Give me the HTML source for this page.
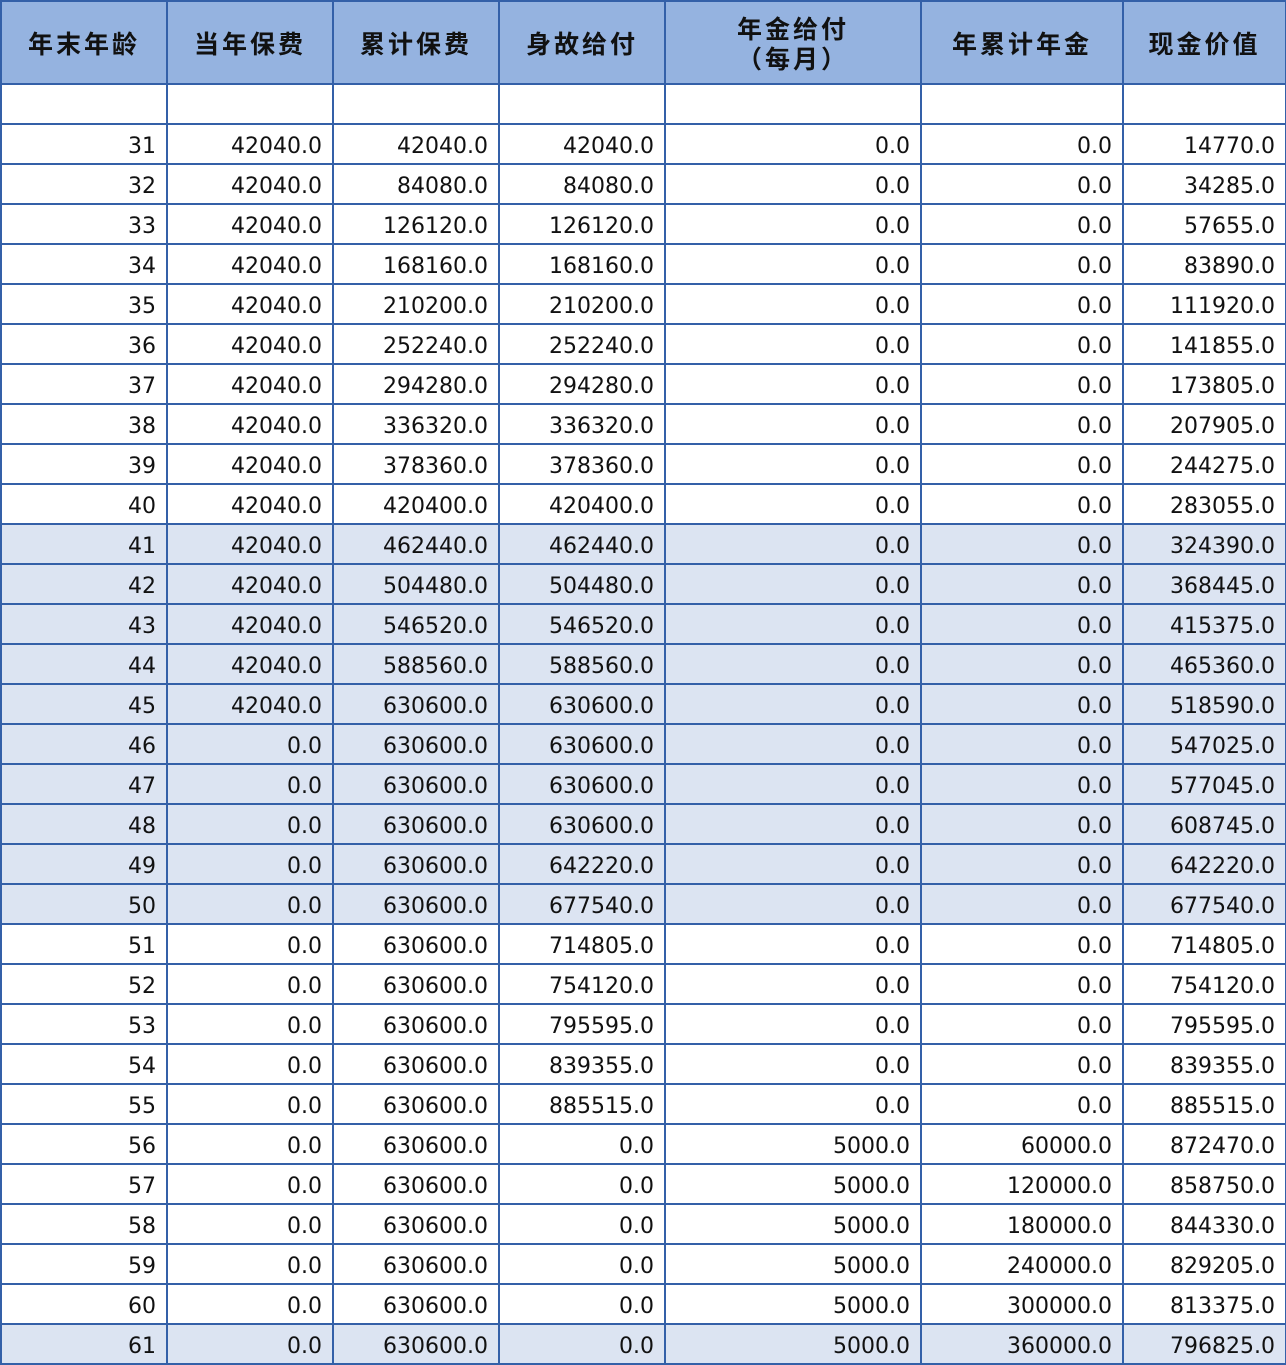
<!DOCTYPE html>
<html><head><meta charset="utf-8"><style>
html,body{margin:0;padding:0;background:#fff;width:1286px;height:1364px;overflow:hidden}
table{border-collapse:collapse;table-layout:fixed;position:absolute;left:0;top:0;width:1285px}
td,th{border:2px solid #3460a8;padding:0 10px 0 0;text-align:right;font-family:"DejaVu Sans","Noto Sans CJK SC",sans-serif;font-size:22px;color:#111;height:38px;line-height:38px;vertical-align:bottom;white-space:nowrap;overflow:hidden}
td{line-height:32px}
th{background:#95b3e0;text-align:center;padding:0;height:81px;line-height:30px;vertical-align:middle;font-family:"Noto Sans CJK SC",sans-serif;font-weight:bold;font-size:25px;letter-spacing:3px}
tr.s td{background:#dce4f2}
</style></head><body>
<table>
<colgroup><col style="width:166px"><col style="width:166px"><col style="width:166px"><col style="width:166px"><col style="width:256px"><col style="width:202px"><col style="width:163px"></colgroup>
<tr><th>年末年龄</th><th>当年保费</th><th>累计保费</th><th>身故给付</th><th>年金给付<br>（每月）</th><th>年累计年金</th><th>现金价值</th></tr>
<tr><td></td><td></td><td></td><td></td><td></td><td></td><td></td></tr>
<tr><td>31</td><td>42040.0</td><td>42040.0</td><td>42040.0</td><td>0.0</td><td>0.0</td><td>14770.0</td></tr>
<tr><td>32</td><td>42040.0</td><td>84080.0</td><td>84080.0</td><td>0.0</td><td>0.0</td><td>34285.0</td></tr>
<tr><td>33</td><td>42040.0</td><td>126120.0</td><td>126120.0</td><td>0.0</td><td>0.0</td><td>57655.0</td></tr>
<tr><td>34</td><td>42040.0</td><td>168160.0</td><td>168160.0</td><td>0.0</td><td>0.0</td><td>83890.0</td></tr>
<tr><td>35</td><td>42040.0</td><td>210200.0</td><td>210200.0</td><td>0.0</td><td>0.0</td><td>111920.0</td></tr>
<tr><td>36</td><td>42040.0</td><td>252240.0</td><td>252240.0</td><td>0.0</td><td>0.0</td><td>141855.0</td></tr>
<tr><td>37</td><td>42040.0</td><td>294280.0</td><td>294280.0</td><td>0.0</td><td>0.0</td><td>173805.0</td></tr>
<tr><td>38</td><td>42040.0</td><td>336320.0</td><td>336320.0</td><td>0.0</td><td>0.0</td><td>207905.0</td></tr>
<tr><td>39</td><td>42040.0</td><td>378360.0</td><td>378360.0</td><td>0.0</td><td>0.0</td><td>244275.0</td></tr>
<tr><td>40</td><td>42040.0</td><td>420400.0</td><td>420400.0</td><td>0.0</td><td>0.0</td><td>283055.0</td></tr>
<tr class="s"><td>41</td><td>42040.0</td><td>462440.0</td><td>462440.0</td><td>0.0</td><td>0.0</td><td>324390.0</td></tr>
<tr class="s"><td>42</td><td>42040.0</td><td>504480.0</td><td>504480.0</td><td>0.0</td><td>0.0</td><td>368445.0</td></tr>
<tr class="s"><td>43</td><td>42040.0</td><td>546520.0</td><td>546520.0</td><td>0.0</td><td>0.0</td><td>415375.0</td></tr>
<tr class="s"><td>44</td><td>42040.0</td><td>588560.0</td><td>588560.0</td><td>0.0</td><td>0.0</td><td>465360.0</td></tr>
<tr class="s"><td>45</td><td>42040.0</td><td>630600.0</td><td>630600.0</td><td>0.0</td><td>0.0</td><td>518590.0</td></tr>
<tr class="s"><td>46</td><td>0.0</td><td>630600.0</td><td>630600.0</td><td>0.0</td><td>0.0</td><td>547025.0</td></tr>
<tr class="s"><td>47</td><td>0.0</td><td>630600.0</td><td>630600.0</td><td>0.0</td><td>0.0</td><td>577045.0</td></tr>
<tr class="s"><td>48</td><td>0.0</td><td>630600.0</td><td>630600.0</td><td>0.0</td><td>0.0</td><td>608745.0</td></tr>
<tr class="s"><td>49</td><td>0.0</td><td>630600.0</td><td>642220.0</td><td>0.0</td><td>0.0</td><td>642220.0</td></tr>
<tr class="s"><td>50</td><td>0.0</td><td>630600.0</td><td>677540.0</td><td>0.0</td><td>0.0</td><td>677540.0</td></tr>
<tr><td>51</td><td>0.0</td><td>630600.0</td><td>714805.0</td><td>0.0</td><td>0.0</td><td>714805.0</td></tr>
<tr><td>52</td><td>0.0</td><td>630600.0</td><td>754120.0</td><td>0.0</td><td>0.0</td><td>754120.0</td></tr>
<tr><td>53</td><td>0.0</td><td>630600.0</td><td>795595.0</td><td>0.0</td><td>0.0</td><td>795595.0</td></tr>
<tr><td>54</td><td>0.0</td><td>630600.0</td><td>839355.0</td><td>0.0</td><td>0.0</td><td>839355.0</td></tr>
<tr><td>55</td><td>0.0</td><td>630600.0</td><td>885515.0</td><td>0.0</td><td>0.0</td><td>885515.0</td></tr>
<tr><td>56</td><td>0.0</td><td>630600.0</td><td>0.0</td><td>5000.0</td><td>60000.0</td><td>872470.0</td></tr>
<tr><td>57</td><td>0.0</td><td>630600.0</td><td>0.0</td><td>5000.0</td><td>120000.0</td><td>858750.0</td></tr>
<tr><td>58</td><td>0.0</td><td>630600.0</td><td>0.0</td><td>5000.0</td><td>180000.0</td><td>844330.0</td></tr>
<tr><td>59</td><td>0.0</td><td>630600.0</td><td>0.0</td><td>5000.0</td><td>240000.0</td><td>829205.0</td></tr>
<tr><td>60</td><td>0.0</td><td>630600.0</td><td>0.0</td><td>5000.0</td><td>300000.0</td><td>813375.0</td></tr>
<tr class="s"><td>61</td><td>0.0</td><td>630600.0</td><td>0.0</td><td>5000.0</td><td>360000.0</td><td>796825.0</td></tr>
</table>
</body></html>
